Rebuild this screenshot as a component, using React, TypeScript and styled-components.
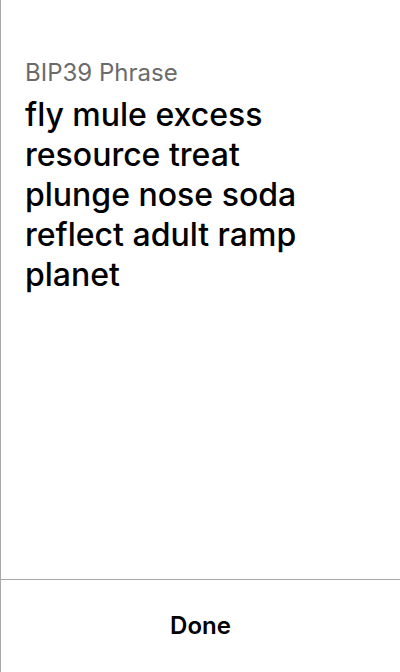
import React from "react";
import styled, { createGlobalStyle } from "styled-components";

const Global = createGlobalStyle`
  html, body { margin: 0; padding: 0; background: #fff; }
  body { font-family: Inter, "Noto Sans", sans-serif; }
`;

const Screen = styled.div`
  width: 400px;
  height: 672px;
  box-sizing: border-box;
  border-left: 1px solid #a8a8a8;
  display: flex;
  flex-direction: column;
  background: #fff;
`;

const Content = styled.div`
  flex: 1;
  padding: 58px 24px 0 24px;
`;

const Label = styled.div`
  font-size: 24px;
  line-height: 30px;
  color: #6b6b6b;
  margin-bottom: 7px;
`;

const Phrase = styled.div`
  font-size: 32px;
  line-height: 40px;
  font-weight: 500;
  color: #000;
  width: 300px;
`;

const Footer = styled.div`
  height: 92px;
  border-top: 1px solid #a8a8a8;
  display: flex;
  align-items: center;
  justify-content: center;
`;

const DoneButton = styled.button`
  background: none;
  border: none;
  font-family: Inter, sans-serif;
  font-size: 24px;
  font-weight: 600;
  color: #000;
  cursor: pointer;
  padding: 0 0 2px 0;
`;

export default function App() {
  return (
    <>
      <Global />
      <Screen>
        <Content>
          <Label>BIP39 Phrase</Label>
          <Phrase>fly mule excess resource treat plunge nose soda reflect adult ramp planet</Phrase>
        </Content>
        <Footer>
          <DoneButton>Done</DoneButton>
        </Footer>
      </Screen>
    </>
  );
}
